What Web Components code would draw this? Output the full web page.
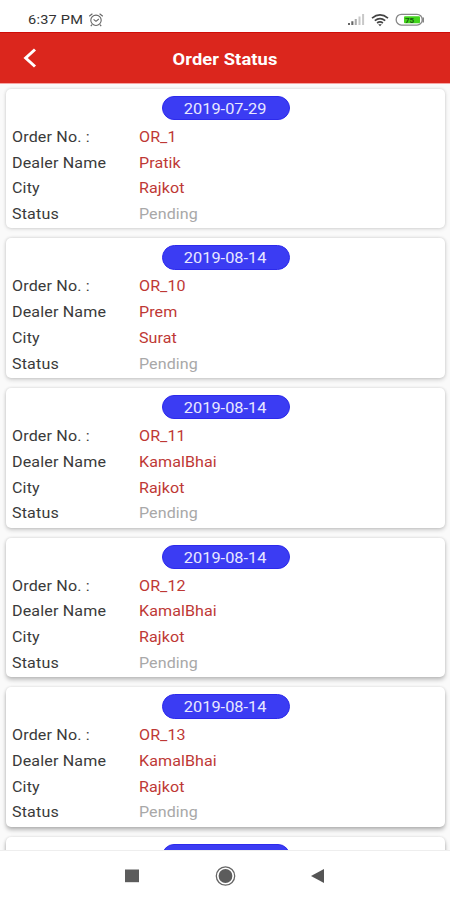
<!DOCTYPE html>
<html lang="en">
<head>
<meta charset="utf-8">
<title>Order Status</title>
<style>
html,body{margin:0;height:100%;overflow:hidden;background:#fff;font-family:Roboto,sans-serif}
</style>
</head>
<body>
<order-app></order-app>
<script>
class BaseElement extends HTMLElement {
  constructor(){ super(); this.attachShadow({mode:'open'}); }
  connectedCallback(){ this.shadowRoot.innerHTML = this.render(); }
}
class StatusBar extends BaseElement {
  render(){ return `<style>
:host{display:flex;height:32px;box-sizing:border-box;padding:7px 25px 0 28px;align-items:center;justify-content:space-between;color:#333;background:#fff}
div{display:flex;align-items:center}
.time{width:60px;font-size:13px;line-height:24px;letter-spacing:.2px;white-space:nowrap;transform:scaleX(1.12);transform-origin:left}
svg{display:block}
</style>
<div><span class="time">6:37 PM</span>
<svg width="16" height="16" viewBox="0 0 16 16" fill="none" stroke="#666" stroke-width="1.1"><circle cx="8" cy="8.3" r="5.2"/><path d="M1.2 4.2 4.4 1.8M14.8 4.2 11.6 1.8M4 12.6l-1.2 1.6M12 12.6l1.2 1.6M5.6 7.3 8 9.3l2.8-2.3"/></svg></div>
<div>
<svg width="17" height="13" viewBox="0 0 17 13"><path fill="#666" d="M0 10h2v2H0zM3.3 8.2h2.1V12H3.3z"/><path fill="#aaa" d="M6.7 6h2.1v6H6.7z"/><path fill="#c8c8c8" d="M10.5 3.6h2V12h-2zM14.1 1h2v11h-2z"/></svg>
<svg style="margin-left:6px" width="18" height="14" viewBox="0 0 18 14"><g fill="none" stroke="#444" stroke-width="1.7"><path d="M1 5.1Q9-1.3 17 5.1M3.8 7.7Q9 3.4 14.2 7.7M6.1 10Q9 7.7 11.9 10"/></g><path fill="#444" d="M7.2 11.2h3.6L9 13.2z"/></svg>
<svg style="margin-left:6px" width="30" height="14" viewBox="0 0 30 14"><rect x="1.2" y="1.3" width="26" height="10.8" rx="5.2" fill="#fff" stroke="#888" stroke-width="1.3"/><path d="M28.2 4.5v5" stroke="#777" stroke-width="1.4"/><rect x="9" y="3.2" width="16" height="7" rx="1" fill="#43d51c"/><text x="10" y="9.6" font-family="Roboto" font-size="8" font-weight="700" fill="#165c0c">75</text></svg>
</div>`; }
}
class AppHeader extends BaseElement {
  render(){ return `<style>
:host{display:grid;grid-template-columns:60px 1fr 60px;align-items:center;height:52px;background:#db261d;border-top:1px solid #cf0c08;border-bottom:1px solid #f6a5a3;box-sizing:border-box;color:#fff}
h1{margin:1px 0 0;text-align:center;font-size:17px;line-height:24px;font-weight:700;letter-spacing:.1px;transform:scaleX(1.075)}
svg{display:block;margin-left:23px}
</style>
<svg width="14" height="20" viewBox="0 0 14 20"><path d="M12 1.5 2.7 10l9.3 8.5" fill="none" stroke="#fff" stroke-width="3"/></svg>
<h1><slot></slot></h1>`; }
}
class OrderField extends BaseElement {
  render(){ return `<style>
:host{display:grid;grid-template-columns:126.5px 1fr;height:25.8px;align-items:center;font-size:15px;line-height:18px;white-space:nowrap;color:#3a3a3a}
span{justify-self:start;transform-origin:left;transform:scaleX(1.07)}
.label{letter-spacing:.15px}
.value{color:var(--value,#be3835);letter-spacing:.08px}
</style><span class="label">${this.getAttribute('label')}</span><span class="value"><slot></slot></span>`; }
}
class OrderCard extends BaseElement {
  render(){
    const a = n => this.getAttribute(n) || '';
    const fields = a('number') ? `
<order-field label="Order No. :">${a('number')}</order-field>
<order-field label="Dealer Name">${a('dealer')}</order-field>
<order-field label="City">${a('city')}</order-field>
<order-field class="pending" label="Status">Pending</order-field>` : '';
    return `<style>
:host{display:block;flex:none;box-sizing:border-box;height:139.7px;padding:7px 6px 0;background:#fff;border-radius:5px;box-shadow:0 var(--drop) 4px rgba(0,0,0,var(--shade)),0 0 3px rgba(0,0,0,.12)}
.date{width:128px;height:24.5px;box-sizing:border-box;margin:0 auto 3.6px;border-radius:13px;background:#3b3cf3;border:1px solid #2d2aec;color:#e8e8ff;font-size:15.5px;line-height:24px;text-align:center}
.date span{display:inline-block;transform:scaleX(1.055)}
.pending{--value:#a8a8a8}
</style>
<div class="date"><span>${a('date')}</span></div>${fields}`; }
}
class NavigationBar extends BaseElement {
  render(){ return `<style>
:host{display:grid;height:50px;grid-template-columns:14px 22px 14px;justify-content:start;column-gap:76px;align-items:center;padding-left:125px;box-sizing:border-box;background:#fff;border-top:1px solid #eee}
svg{display:block}
</style>
<svg width="14" height="14" viewBox="0 0 14 14"><path fill="#5c5c5c" d="M0 .5h14v12.7H0z"/></svg>
<svg width="22" height="22" viewBox="0 0 22 22"><circle cx="10.5" cy="11" r="9.2" fill="none" stroke="#666" stroke-width="1.3"/><circle cx="10.5" cy="11" r="6.9" fill="#5c5c5c"/></svg>
<svg style="margin-left:-2px" width="14" height="14" viewBox="0 0 14 14"><path fill="#555" d="M0 7 13 0v14z"/></svg>`; }
}
class OrderApp extends BaseElement {
  render(){
    const orders = [['2019-07-29','OR_1','Pratik','Rajkot'],['2019-08-14','OR_10','Prem','Surat'],['2019-08-14','OR_11','KamalBhai','Rajkot'],['2019-08-14','OR_12','KamalBhai','Rajkot'],['2019-08-14','OR_13','KamalBhai','Rajkot'],['','','','']];
    return `<style>
:host{display:flex;flex-direction:column;height:900px;width:450px;overflow:hidden}
main{flex:1;min-height:0;overflow:hidden;background:#fafafa;padding:4.8px 5px 0 6px;display:flex;flex-direction:column;gap:9.9px}
</style>
<status-bar></status-bar><app-header>Order Status</app-header>
<main>${orders.map((o,i)=>`<order-card style="--drop:${1+i*.5}px;--shade:${.12+i*.035}" date="${o[0]}" number="${o[1]}" dealer="${o[2]}" city="${o[3]}"></order-card>`).join('')}</main>
<navigation-bar></navigation-bar>`; }
}
customElements.define('status-bar',StatusBar);
customElements.define('app-header',AppHeader);
customElements.define('order-field',OrderField);
customElements.define('order-card',OrderCard);
customElements.define('navigation-bar',NavigationBar);
customElements.define('order-app',OrderApp);
</script>
</body>
</html>
